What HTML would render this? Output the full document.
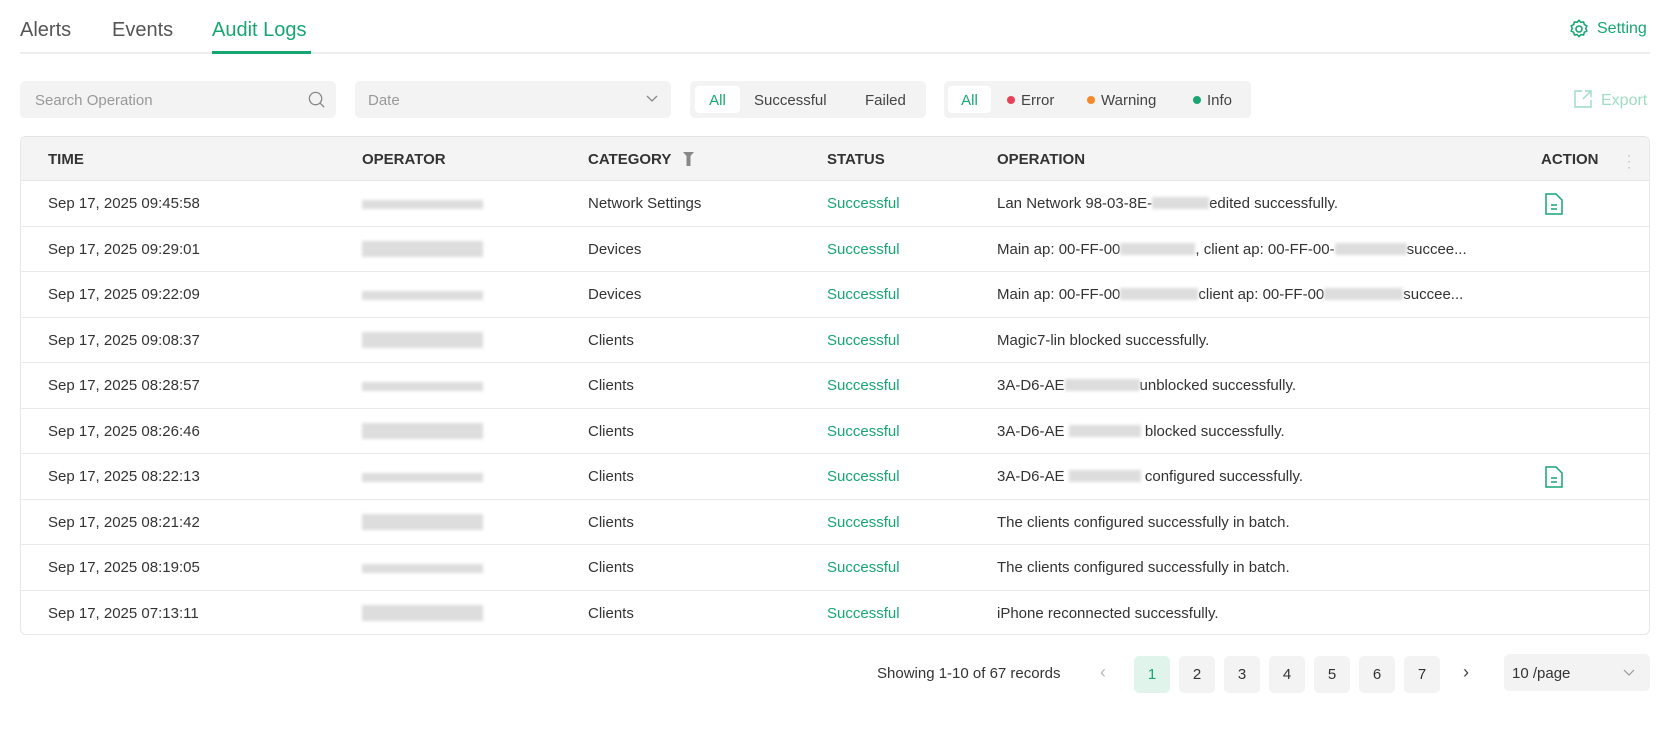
<!DOCTYPE html><html><head><style>
*{margin:0;padding:0;box-sizing:border-box}
body{width:1670px;height:732px;background:#fff;font-family:"Liberation Sans",sans-serif;color:#333;position:relative;overflow:hidden;font-size:15px}
.a{position:absolute;white-space:nowrap}
.tab{font-size:20px;top:19px;color:#555}
.box{position:absolute;background:#f3f3f3;border-radius:5px;top:81px;height:37px}
.ph{color:#999;font-size:15px;position:absolute;top:11px}
.seg span{position:absolute;top:5px;height:27px;line-height:29px;font-size:15px;color:#444}
.dot{display:inline-block;width:8px;height:8px;border-radius:50%;margin-right:6px;vertical-align:1px}
.hd{font-weight:bold;font-size:15px;color:#333;top:151px}
.row{position:absolute;left:21px;width:1628px;height:45.5px;border-bottom:1px solid #e8e8e8}
.row div{position:absolute;top:14px;white-space:nowrap}
.blur{display:inline-block;background:#ddd;height:12px;filter:blur(1.5px);vertical-align:-1px}
.ok{color:#17a672}
.pg{position:absolute;top:656px;width:36px;height:37px;border-radius:5px;background:#f3f3f3;text-align:center;line-height:37px;font-size:15px;color:#333}
</style></head><body>
<div class="a tab" style="left:20px">Alerts</div>
<div class="a tab" style="left:112px">Events</div>
<div class="a tab" style="left:212px;color:#17a672">Audit Logs</div>
<div class="a" style="left:20px;top:52px;width:1630px;height:2px;background:#eee"></div>
<div class="a" style="left:212px;top:51px;width:99px;height:3px;background:#17a672"></div>
<svg class="a" style="left:1568px;top:18px" width="22" height="22" viewBox="0 0 24 24" fill="none" stroke="#17a672" stroke-width="1.7"><path d="M12 2.5l2 2.2 3-.4.8 2.9 2.7 1.4-1.1 2.8 1.1 2.8-2.7 1.4-.8 2.9-3-.4-2 2.2-2-2.2-3 .4-.8-2.9-2.7-1.4 1.1-2.8-1.1-2.8 2.7-1.4.8-2.9 3 .4z"/><circle cx="12" cy="12" r="3.3"/></svg>
<div class="a" style="left:1597px;top:20px;font-size:16px;color:#17a672">Setting</div>

<div class="box" style="left:20px;width:316px"><span class="ph" style="left:15px">Search Operation</span>
<svg class="a" style="left:287px;top:9px" width="19" height="19" viewBox="0 0 20 20" fill="none" stroke="#888" stroke-width="1.4"><circle cx="9" cy="9" r="6.5"/><path d="M14 14l4 4"/></svg></div>
<div class="box" style="left:355px;width:316px"><span class="ph" style="left:13px">Date</span>
<svg class="a" style="left:291px;top:14px" width="12" height="8" viewBox="0 0 12 8" fill="none" stroke="#888" stroke-width="1.3"><path d="M1 1l5 5 5-5"/></svg></div>
<div class="box seg" style="left:690px;width:236px">
<span style="left:5px;width:45px;background:#fff;border-radius:4px;text-align:center;color:#17a672">All</span>
<span style="left:64px">Successful</span><span style="left:175px">Failed</span></div>
<div class="box seg" style="left:944px;width:307px">
<span style="left:4px;width:43px;background:#fff;border-radius:4px;text-align:center;color:#17a672">All</span>
<span style="left:63px"><i class="dot" style="background:#e8415a"></i>Error</span>
<span style="left:143px"><i class="dot" style="background:#f5892a"></i>Warning</span>
<span style="left:249px"><i class="dot" style="background:#17a672"></i>Info</span></div>
<svg class="a" style="left:1573px;top:89px" width="20" height="20" viewBox="0 0 20 20" fill="none" stroke="#9edcc3" stroke-width="1.4"><path d="M9 2H2v16h16v-7M12 2h6v6M18 2l-8 8"/></svg>
<div class="a" style="left:1601px;top:92px;font-size:16px;color:#9edcc3">Export</div>

<div class="a" style="left:20px;top:136px;width:1630px;height:499px;border:1px solid #e8e8e8;border-radius:6px;border-top-color:#e3e3e3"></div>
<div class="a" style="left:21px;top:137px;width:1628px;height:44px;background:#f4f4f4;border-bottom:1px solid #e6e6e6;border-radius:6px 6px 0 0"></div>
<div class="a hd" style="left:48px">TIME</div>
<div class="a hd" style="left:362px">OPERATOR</div>
<div class="a hd" style="left:588px">CATEGORY</div>
<svg class="a" style="left:683px;top:152px" width="11" height="14" viewBox="0 0 11 14"><path d="M0 0h11l-3.5 4v10h-4V4z" fill="#888"/></svg>
<div class="a hd" style="left:827px">STATUS</div>
<div class="a hd" style="left:997px">OPERATION</div>
<div class="a hd" style="left:1541px">ACTION</div>
<div class="a" style="left:1627px;top:152px;color:#aaa;font-size:12px;line-height:6px">·<br>·<br>·</div>

<div class="row" style="top:181px"><div style="left:27px">Sep 17, 2025 09:45:58</div><div style="left:341px"><span class="blur" style="width:121px;height:9px"></span></div><div style="left:567px">Network Settings</div><div class="ok" style="left:806px">Successful</div><div style="left:976px">Lan Network 98-03-8E-<span class="blur" style="width:57px"></span>edited successfully.</div>
<svg style="position:absolute;left:1524px;top:12px" width="18" height="22" viewBox="0 0 18 22" fill="none" stroke="#17a672" stroke-width="1.5"><path d="M1 1h10l6 6v14H1z M6 12h6M6 16h6"/></svg></div>
<div class="row" style="top:226.5px"><div style="left:27px">Sep 17, 2025 09:29:01</div><div style="left:341px"><span class="blur" style="width:121px;height:16px"></span></div><div style="left:567px">Devices</div><div class="ok" style="left:806px">Successful</div><div style="left:976px">Main ap: 00-FF-00<span class="blur" style="width:75px"></span>, client ap: 00-FF-00-<span class="blur" style="width:72px"></span>succee...</div></div>
<div class="row" style="top:272px"><div style="left:27px">Sep 17, 2025 09:22:09</div><div style="left:341px"><span class="blur" style="width:121px;height:9px"></span></div><div style="left:567px">Devices</div><div class="ok" style="left:806px">Successful</div><div style="left:976px">Main ap: 00-FF-00<span class="blur" style="width:78px"></span>client ap: 00-FF-00<span class="blur" style="width:79px"></span>succee...</div></div>
<div class="row" style="top:317.5px"><div style="left:27px">Sep 17, 2025 09:08:37</div><div style="left:341px"><span class="blur" style="width:121px;height:16px"></span></div><div style="left:567px">Clients</div><div class="ok" style="left:806px">Successful</div><div style="left:976px">Magic7-lin blocked successfully.</div></div>
<div class="row" style="top:363px"><div style="left:27px">Sep 17, 2025 08:28:57</div><div style="left:341px"><span class="blur" style="width:121px;height:9px"></span></div><div style="left:567px">Clients</div><div class="ok" style="left:806px">Successful</div><div style="left:976px">3A-D6-AE<span class="blur" style="width:75px"></span>unblocked successfully.</div></div>
<div class="row" style="top:408.5px"><div style="left:27px">Sep 17, 2025 08:26:46</div><div style="left:341px"><span class="blur" style="width:121px;height:16px"></span></div><div style="left:567px">Clients</div><div class="ok" style="left:806px">Successful</div><div style="left:976px">3A-D6-AE <span class="blur" style="width:72px"></span> blocked successfully.</div></div>
<div class="row" style="top:454px"><div style="left:27px">Sep 17, 2025 08:22:13</div><div style="left:341px"><span class="blur" style="width:121px;height:9px"></span></div><div style="left:567px">Clients</div><div class="ok" style="left:806px">Successful</div><div style="left:976px">3A-D6-AE <span class="blur" style="width:72px"></span> configured successfully.</div>
<svg style="position:absolute;left:1524px;top:12px" width="18" height="22" viewBox="0 0 18 22" fill="none" stroke="#17a672" stroke-width="1.5"><path d="M1 1h10l6 6v14H1z M6 12h6M6 16h6"/></svg></div>
<div class="row" style="top:499.5px"><div style="left:27px">Sep 17, 2025 08:21:42</div><div style="left:341px"><span class="blur" style="width:121px;height:16px"></span></div><div style="left:567px">Clients</div><div class="ok" style="left:806px">Successful</div><div style="left:976px">The clients configured successfully in batch.</div></div>
<div class="row" style="top:545px"><div style="left:27px">Sep 17, 2025 08:19:05</div><div style="left:341px"><span class="blur" style="width:121px;height:9px"></span></div><div style="left:567px">Clients</div><div class="ok" style="left:806px">Successful</div><div style="left:976px">The clients configured successfully in batch.</div></div>
<div class="row" style="top:590.5px;border-bottom:none"><div style="left:27px">Sep 17, 2025 07:13:11</div><div style="left:341px"><span class="blur" style="width:121px;height:16px"></span></div><div style="left:567px">Clients</div><div class="ok" style="left:806px">Successful</div><div style="left:976px">iPhone reconnected successfully.</div></div>

<div class="a" style="left:877px;top:665px">Showing 1-10 of 67 records</div>
<div class="a" style="left:1100px;top:662px;color:#bbb;font-size:18px">‹</div>
<div class="pg" style="left:1134px;background:#e0f4ec;color:#17a672">1</div>
<div class="pg" style="left:1179px">2</div>
<div class="pg" style="left:1224px">3</div>
<div class="pg" style="left:1269px">4</div>
<div class="pg" style="left:1314px">5</div>
<div class="pg" style="left:1359px">6</div>
<div class="pg" style="left:1404px">7</div>
<div class="a" style="left:1463px;top:662px;color:#444;font-size:18px">›</div>
<div class="a" style="left:1504px;top:654px;width:146px;height:37px;background:#f3f3f3;border-radius:5px"><span style="position:absolute;left:8px;top:11px">10 /page</span>
<svg style="position:absolute;left:119px;top:15px" width="12" height="8" viewBox="0 0 12 8" fill="none" stroke="#999" stroke-width="1.2"><path d="M1 1l5 5 5-5"/></svg></div>
</body></html>
